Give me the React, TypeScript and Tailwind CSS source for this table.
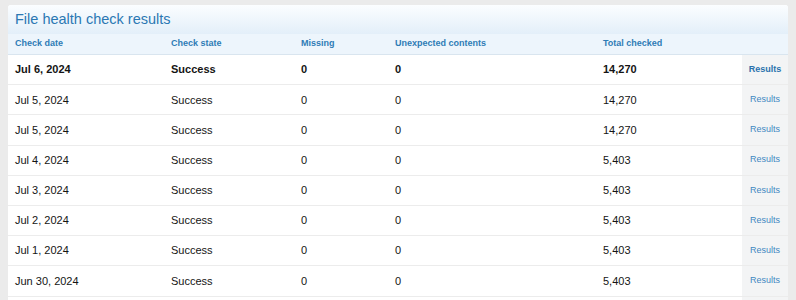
const rows = [
  { date: "Jul 6, 2024", total: "14,270" },
  { date: "Jul 5, 2024", total: "14,270" },
  { date: "Jul 5, 2024", total: "14,270" },
  { date: "Jul 4, 2024", total: "5,403" },
  { date: "Jul 3, 2024", total: "5,403" },
  { date: "Jul 2, 2024", total: "5,403" },
  { date: "Jul 1, 2024", total: "5,403" },
  { date: "Jun 30, 2024", total: "5,403" },
];

const cols = "grid grid-cols-[156px_130px_94px_208px_146px_46px]";

export default function App() {
  return (
    <div className="h-[300px] overflow-hidden bg-[#ebebeb] pl-2 pr-2 pt-[5px] font-['Liberation_Sans',Arial,sans-serif]">
      <div className="h-[295px] w-[780px] rounded-t-[3px] bg-white">
        {/* title block */}
        <div className="h-[29px] rounded-t-[3px] bg-gradient-to-b from-[#fbfdff] to-[#e3eff9] px-[7px] pt-[6px] text-[14.5px] leading-[17px] text-[#2b78b3]">
          File health check results
        </div>

        {/* column headers */}
        <div className={`${cols} h-[21px] items-center border-b border-[#d9e5ef] bg-[#edf5fc] text-[9px] font-bold text-[#2f7cb6]`}>
          <div className="px-[7px]">Check date</div>
          <div className="px-[7px]">Check state</div>
          <div className="px-[7px]">Missing</div>
          <div className="px-[7px]">Unexpected contents</div>
          <div className="px-[7px]">Total checked</div>
          <div />
        </div>

        {rows.map((r, i) => (
          <div
            key={i}
            className={`${cols} h-[30.2px] items-center border-b border-[#ececec] text-[11px] text-[#141414] ${i === 0 ? "font-bold" : ""}`}
          >
            <div className="px-[7px]">{r.date}</div>
            <div className="px-[7px]">Success</div>
            <div className="px-[7px]">0</div>
            <div className="px-[7px]">0</div>
            <div className="px-[7px]">{r.total}</div>
            <div className={`flex h-full items-center justify-center bg-[#f3f4f5] text-[9px] ${i === 0 ? "text-[#2a72ad]" : "text-[#3f88c2]"}`}>
              Results
            </div>
          </div>
        ))}
        <div className={`${cols} h-[10px]`}>
          <div />
          <div />
          <div />
          <div />
          <div />
          <div className="bg-[#f3f4f5]" />
        </div>
      </div>
    </div>
  );
}
